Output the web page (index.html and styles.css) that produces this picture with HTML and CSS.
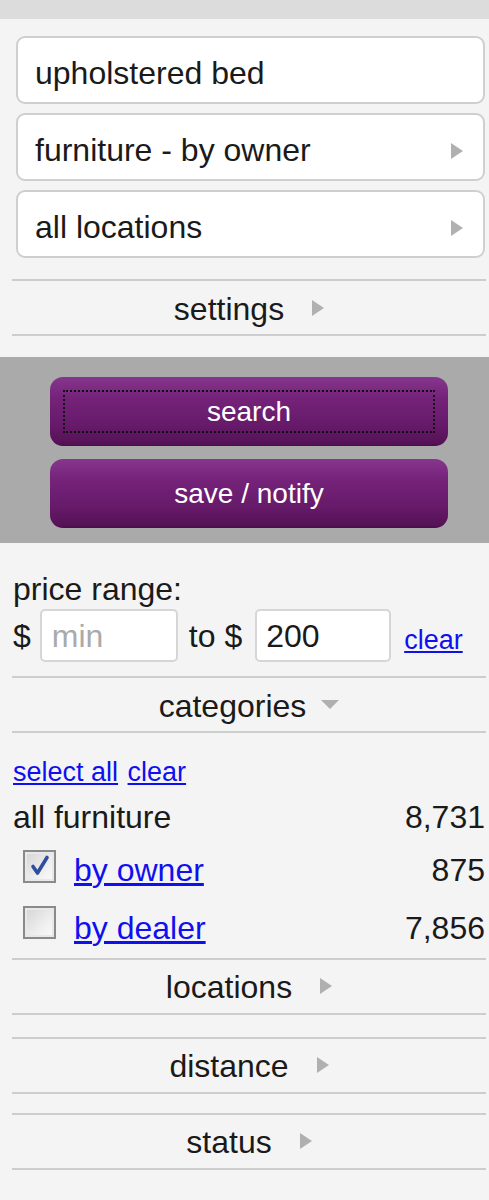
FILE: index.html
```html
<!DOCTYPE html>
<html>
<head>
<meta charset="utf-8">
<link rel="stylesheet" href="styles.css">
</head>
<body>
<div class="topbar"></div>
<div class="fields">
  <div class="field">upholstered bed</div>
  <div class="field"><span>furniture - by owner</span><span class="tri-right tri-field"></span></div>
  <div class="field"><span>all locations</span><span class="tri-right tri-field"></span></div>
</div>
<div class="section sec-settings"><span>settings</span><span class="tri-right"></span></div>
<div class="actions">
  <button class="btn btn-focus">search</button>
  <button class="btn">save / notify</button>
</div>
<div class="price">
  <div class="label">price range:</div>
  <div class="price-row">
    <span>$</span>
    <span class="box box-min placeholder">min</span>
    <span>to $</span>
    <span class="box box-max">200</span>
    <a class="link link-clear" href="#">clear</a>
  </div>
</div>
<div class="section sec-categories"><span>categories</span><span class="tri-down"></span></div>
<div class="catlist">
  <div class="links"><a class="link" href="#">select all</a> <a class="link" href="#">clear</a></div>
  <div class="cat-row cat-all"><span>all furniture</span><span class="count">8,731</span></div>
  <div class="cat-row cat-sub cat-owner">
    <span class="check checked"><svg width="28" height="28" viewBox="0 0 28 28"><path d="M7 13.5 L11.5 20 L21 4.5" fill="none" stroke="#2f4f9e" stroke-width="3.6" stroke-linecap="round" stroke-linejoin="round"/></svg></span>
    <a class="link sublink" href="#">by owner</a>
    <span class="count">875</span>
  </div>
  <div class="cat-row cat-sub cat-dealer">
    <span class="check"></span>
    <a class="link sublink" href="#">by dealer</a>
    <span class="count">7,856</span>
  </div>
</div>
<div class="section sec-locations"><span>locations</span><span class="tri-right"></span></div>
<div class="section sec-distance"><span>distance</span><span class="tri-right"></span></div>
<div class="section sec-status"><span>status</span><span class="tri-right"></span></div>
</body>
</html>
```

FILE: styles.css
```css
html, body {
  margin: 0;
  padding: 0;
}
body {
  background: #f4f4f4;
  font-family: "Liberation Sans", Arial, sans-serif;
  color: #1a1a1a;
  width: 489px;
}
.topbar {
  height: 19px;
  background: #dcdcdc;
}
.fields {
  padding: 17px 4px 0 16px;
  display: flex;
  flex-direction: column;
  gap: 9px;
}
.field {
  box-sizing: border-box;
  height: 68px;
  background: #fff;
  border: 2px solid #cfcfcf;
  border-radius: 9px;
  font-size: 32px;
  padding: 5px 20px 0 17px;
  display: flex;
  align-items: center;
  justify-content: space-between;
  line-height: 36px;
}
.tri-right {
  width: 0;
  height: 0;
  border-left: 12px solid #b0b0b0;
  border-top: 8.5px solid transparent;
  border-bottom: 8.5px solid transparent;
}
.tri-field {
  margin-top: 3px;
}
.tri-down {
  width: 0;
  height: 0;
  border-top: 9px solid #b0b0b0;
  border-left: 9.5px solid transparent;
  border-right: 9.5px solid transparent;
}
.section {
  box-sizing: border-box;
  height: 57px;
  margin: 0 3px 0 12px;
  border-top: 2px solid #cdcdcd;
  border-bottom: 2px solid #cdcdcd;
  display: flex;
  align-items: center;
  justify-content: center;
  gap: 28px;
  font-size: 32px;
  line-height: 36px;
}
.section span:first-child {
  margin-top: 2px;
}
.sec-settings {
  margin-top: 21px;
}
.sec-categories {
  margin-top: 14px;
  gap: 15px;
}
.sec-locations {
  margin-top: 12px;
}
.sec-distance {
  margin-top: 22px;
}
.sec-status {
  margin-top: 19px;
}
.actions {
  margin-top: 21px;
  background: #aaaaaa;
  padding: 20px 41px 15px 50px;
  display: flex;
  flex-direction: column;
  gap: 13px;
}
.btn {
  height: 69px;
  width: 100%;
  border: none;
  border-radius: 13px;
  background: linear-gradient(to bottom, #86368c 0%, #75237a 30%, #661a69 70%, #561256 96%, #4a0c4a 100%);
  color: #fff;
  font-family: "Liberation Sans", Arial, sans-serif;
  font-size: 28px;
  padding: 0;
  margin: 0;
}
.btn-focus {
  outline: 2px dotted #111;
  outline-offset: -15px;
}
.price {
  padding: 28px 4px 0 13px;
}
.label {
  font-size: 32px;
  line-height: 36px;
}
.price-row {
  margin-top: 2px;
  display: flex;
  align-items: center;
  font-size: 32px;
  line-height: 36px;
}
.box {
  box-sizing: border-box;
  height: 53px;
  background: #fff;
  border: 2px solid #d6d6d6;
  border-radius: 5px;
  display: flex;
  align-items: center;
  padding-left: 10px;
}
.box-min {
  width: 138px;
  margin: 0 11px 0 9px;
}
.box-max {
  width: 136px;
  margin: 0 13px 0 13px;
  padding-left: 9px;
}
.placeholder {
  color: #aaaaaa;
}
.link {
  color: #1010ee;
  text-decoration: underline;
}
.link-clear {
  font-size: 27px;
  margin-top: 8px;
}
.catlist {
  padding: 23px 4px 0 13px;
}
.links {
  font-size: 27px;
  line-height: 32px;
}
.links .link + .link {
  margin-left: 2px;
}
.cat-row {
  display: flex;
  align-items: baseline;
  font-size: 32px;
  line-height: 36px;
}
.cat-all {
  margin-top: 11px;
}
.count {
  margin-left: auto;
}
.cat-sub {
  padding-left: 10px;
}
.cat-owner {
  margin-top: 15px;
}
.cat-dealer {
  margin-top: 18px;
}
.check {
  box-sizing: border-box;
  width: 33px;
  height: 33px;
  border: 2px solid #8a8a8a;
  box-shadow: inset 0 0 0 2px #e8e8e8;
  background: linear-gradient(135deg, #d4d4d4 0%, #eeeeee 60%, #fbfbfb 100%);
  margin-right: 18px;
  display: flex;
  align-items: center;
  justify-content: center;
}
.sublink {
  font-size: 32px;
}
```
